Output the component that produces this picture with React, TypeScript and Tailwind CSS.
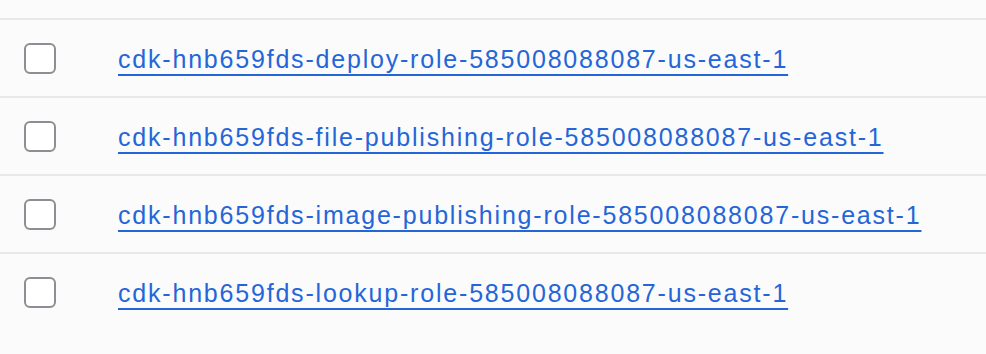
const roles = [
  "cdk-hnb659fds-deploy-role-585008088087-us-east-1",
  "cdk-hnb659fds-file-publishing-role-585008088087-us-east-1",
  "cdk-hnb659fds-image-publishing-role-585008088087-us-east-1",
  "cdk-hnb659fds-lookup-role-585008088087-us-east-1",
];

export default function App() {
  return (
    <main className="min-h-[354px] bg-[#fbfbfc] pt-[18px] font-['Liberation_Sans',Arial,sans-serif]">
      {roles.map((role) => (
        <div
          key={role}
          className="flex h-[78px] items-center border-t-2 border-[#e9e9ed] pl-6"
        >
          <div className="h-[31px] w-[32px] shrink-0 rounded-[6px] border-2 border-[#8d8d93] bg-white" />
          <a
            href="#"
            className="ml-[62px] mt-[2px] text-[25px] leading-none tracking-[1.8px] text-[#2466d8] underline decoration-2 underline-offset-[6px] [text-decoration-skip-ink:none]"
          >
            {role}
          </a>
        </div>
      ))}
    </main>
  );
}
